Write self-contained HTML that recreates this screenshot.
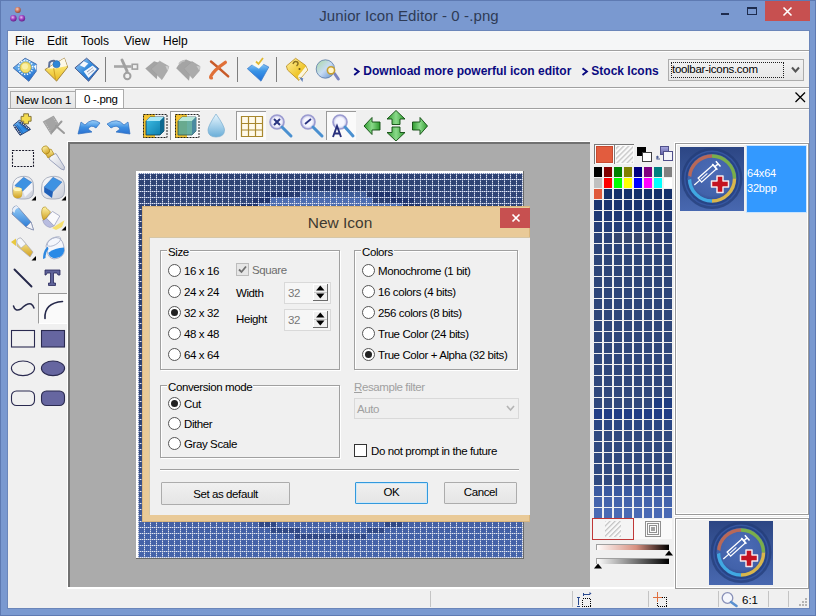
<!DOCTYPE html>
<html><head><meta charset="utf-8">
<style>
*{margin:0;padding:0;box-sizing:border-box}
html,body{width:816px;height:616px;overflow:hidden;background:#7797D0;font-family:"Liberation Sans",sans-serif}
.a{position:absolute}
#win{position:absolute;left:0;top:0;width:816px;height:616px;background:#7A99D0;border:1px solid #5E7AB2}
.title{position:absolute;left:0;top:7px;width:816px;text-align:center;font-size:15px;color:#1E2B45;letter-spacing:0.1px}
.menu span{position:absolute;top:34px;font-size:12px;color:#000}
.tb{font-size:11px}
.sep{position:absolute;width:1px;background:#A0A0A0;border-right:1px solid #fff}
</style></head><body>
<div id="win">
</div>
<!-- title -->
<div class="a title" style="left:1px;top:7px;color:#2E3B55">Junior Icon Editor - 0 -.png</div>
<!-- client -->
<div class="a" style="left:7px;top:30px;width:803px;height:579px;border:1px solid #6B86BA"></div>
<div class="a" style="left:8px;top:31px;width:801px;height:577px;background:#F0F0F0"></div>
<!-- menu bar -->
<div class="a" style="left:8px;top:31px;width:801px;height:19px;background:#F5F6F7"></div>
<div class="a" style="left:8px;top:50px;width:801px;height:1px;background:#A0A0A0"></div>
<div class="a" style="left:8px;top:51px;width:801px;height:1px;background:#FFFFFF"></div>
<div class="menu">
<span style="left:15px">File</span>
<span style="left:47px">Edit</span>
<span style="left:81px">Tools</span>
<span style="left:124px">View</span>
<span style="left:163px">Help</span>
</div>
<!-- toolbar 1 bottom line -->
<div class="a" style="left:8px;top:87px;width:801px;height:1px;background:#A0A0A0"></div>
<div class="a" style="left:8px;top:88px;width:801px;height:1px;background:#FFFFFF"></div>
<!-- tab bar line -->
<div class="a" style="left:8px;top:108px;width:801px;height:1px;background:#A0A0A0"></div>
<div class="a" style="left:8px;top:109px;width:801px;height:1px;background:#FFFFFF"></div>


<!-- app icon + window buttons -->
<svg class="a" style="left:0;top:0" width="816" height="31">
<defs>
<radialGradient id="gp" cx="0.4" cy="0.35" r="0.7"><stop offset="0" stop-color="#E6B6F0"/><stop offset="0.5" stop-color="#9B3FC0"/><stop offset="1" stop-color="#5E1E80"/></radialGradient>
<radialGradient id="go" cx="0.4" cy="0.35" r="0.7"><stop offset="0" stop-color="#F3D0C0"/><stop offset="0.5" stop-color="#D07A60"/><stop offset="1" stop-color="#8A4030"/></radialGradient>
</defs>
<circle cx="17.8" cy="10" r="3" fill="url(#go)"/>
<circle cx="13.4" cy="18.3" r="3.2" fill="url(#gp)"/>
<circle cx="21.9" cy="18.3" r="3.2" fill="url(#gp)"/>
<rect x="721" y="13" width="8" height="2" fill="#1E2C4E"/>
<rect x="747.5" y="7.5" width="9" height="7" fill="none" stroke="#1E2C4E" stroke-width="1"/>
<rect x="747" y="7" width="10" height="2" fill="#1E2C4E"/>
<rect x="765" y="1" width="45" height="20" fill="#C75050"/>
<path d="M783.5 7.5 L791.5 15.5 M791.5 7.5 L783.5 15.5" stroke="#fff" stroke-width="1.6"/>
</svg>
<!-- toolbar 1 icons -->
<svg class="a" style="left:0;top:52px" width="816" height="36" viewBox="0 52 816 36">
<defs>
<linearGradient id="gb1" x1="0" y1="0" x2="0" y2="1"><stop offset="0" stop-color="#8EC8F5"/><stop offset="0.45" stop-color="#3C8EE0"/><stop offset="1" stop-color="#1A5CB8"/></linearGradient>
<linearGradient id="gy1" x1="0" y1="0" x2="0" y2="1"><stop offset="0" stop-color="#FFF0A0"/><stop offset="0.5" stop-color="#F6CE3A"/><stop offset="1" stop-color="#C8941A"/></linearGradient>
<linearGradient id="gs1" x1="0" y1="0" x2="0" y2="1"><stop offset="0" stop-color="#C8C8C8"/><stop offset="1" stop-color="#8E8E8E"/></linearGradient>
<linearGradient id="gr1" x1="0" y1="0" x2="1" y2="1"><stop offset="0" stop-color="#F0A070"/><stop offset="1" stop-color="#B8401A"/></linearGradient>
<radialGradient id="gglobe" cx="0.35" cy="0.35" r="0.7"><stop offset="0" stop-color="#E8F4E8"/><stop offset="0.5" stop-color="#8CC0A0"/><stop offset="1" stop-color="#3C70B0"/></radialGradient>
</defs>
<!-- new -->
<linearGradient id="gnew" x1="0" y1="0" x2="0.3" y2="1"><stop offset="0" stop-color="#C8E6FA"/><stop offset="0.4" stop-color="#5AA6EA"/><stop offset="1" stop-color="#2674D2"/></linearGradient>
<path d="M13.2 67.9 L25.1 58.2 L36.6 64.3 L36.3 71.1 L28.8 81.3 Z" fill="url(#gnew)" stroke="#3A64A8" stroke-width="0.9" stroke-linejoin="round"/>
<path d="M33.9 66.2 L36.5 64.5 L36.3 71 Z" fill="#F4FAFF"/>
<circle cx="25.6" cy="67.4" r="7" fill="none" stroke="#F0FAFF" stroke-width="1.6" stroke-dasharray="1.3 1.5"/>
<circle cx="25.6" cy="67.4" r="5.4" fill="#F2E070" stroke="#D6B838" stroke-width="0.8"/>
<circle cx="25" cy="66.5" r="3" fill="#FAF0A8"/>
<!-- open -->
<linearGradient id="gfold" x1="0" y1="0" x2="0" y2="1"><stop offset="0" stop-color="#FFF6C8"/><stop offset="0.45" stop-color="#F8DE60"/><stop offset="1" stop-color="#E8B820"/></linearGradient>
<path d="M44.9 69.6 L64.4 58.2 L67.6 67.2 L56.6 81.1 Z" fill="url(#gfold)" stroke="#9C7A30" stroke-width="0.9" stroke-linejoin="round"/>
<path d="M47 68.5 L64.4 58.2 L67 66 L55 68.5 Z" fill="#FCF8E8"/>
<path d="M53.7 68.2 L55.5 79.4" stroke="#C89A20" stroke-width="0.9"/>
<circle cx="56.5" cy="64.2" r="3.6" fill="#2E86D8" stroke="#2A60A0" stroke-width="0.5"/>
<path d="M49 67.5 L49.5 62.5 Q52 60 55 61" stroke="#5A6E98" stroke-width="2" fill="none"/>
<!-- save -->
<linearGradient id="gflop" x1="0" y1="0" x2="1" y2="1"><stop offset="0" stop-color="#A8D4F8"/><stop offset="0.5" stop-color="#2E86DA"/><stop offset="1" stop-color="#3060B0"/></linearGradient>
<path d="M74.9 67.9 L86.6 58.2 L98.8 68.7 L88.6 81.3 Z" fill="url(#gflop)" stroke="#4A5C90" stroke-width="1" stroke-linejoin="round"/>
<path d="M83.7 71.6 L92.5 65.5 L96.9 69.1 L88.6 77.9 Z" fill="#F2F6FC"/>
<path d="M87 72 L93 67.5 M88.5 74 L94.5 69.5" stroke="#3A4A70" stroke-width="0.8" stroke-dasharray="0.9 0.6"/>
<path d="M79.8 65.2 L83.7 61.3 L88.3 63.5 L84.4 67.4 Z" fill="#F6F8FC"/>
<rect x="105" y="57" width="1" height="25" fill="#7E7E7E"/>
<!-- cut (gray) -->
<path d="M114 66.5 L131.5 66.5" stroke="#A6A6A6" stroke-width="2.6"/>
<rect x="132.2" y="64.3" width="5.3" height="4.8" fill="#F0F0F0" stroke="#A2A2A2" stroke-width="1.6"/>
<path d="M122 60 L127 71 L127 74" stroke="#A0A0A0" stroke-width="3" fill="none" stroke-linecap="round"/>
<circle cx="127.3" cy="76" r="3.2" fill="#F0F0F0" stroke="#A0A0A0" stroke-width="2"/>
<!-- copy gray -->
<path d="M145.3 68.6 L154.1 61.2 L159.6 63.1 L156.7 79.3 Z" fill="#A4A4A4"/>
<path d="M151.2 69 L159.6 61.2 L168.8 66.4 L167.4 70.8 L161.9 79.6 Z" fill="#ABABAB" stroke="#9C9C9C" stroke-width="0.6"/>
<path d="M165.5 66 L168.8 66.4 L167.4 70.8 Z" fill="#CFCFCF"/>
<!-- paste gray -->
<path d="M176.2 68.2 L181 61.2 L186.1 59.4 L192 62 L189 80.7 Z" fill="#A4A4A4"/>
<path d="M179 64 Q181 61 185 60.5" stroke="#C0C0C0" stroke-width="1.6" fill="none"/>
<path d="M183.9 68.6 L192 61.6 L200 66.4 L199.4 70.8 L192.7 78.5 Z" fill="#ABABAB" stroke="#9C9C9C" stroke-width="0.6"/>
<path d="M196.5 66 L200 66.4 L199.4 70.8 Z" fill="#CFCFCF"/>
<!-- delete X -->
<path d="M211 61.5 Q219 68 228.2 76.4" stroke="#C85A28" stroke-width="2.4" fill="none" stroke-linecap="round"/>
<path d="M225.4 62.3 Q214 70 211 76 Q210 78 211.5 78" stroke="#E07038" stroke-width="3.2" fill="none" stroke-linecap="round"/>
<rect x="237" y="57" width="1" height="25" fill="#7E7E7E"/>
<!-- import box check -->
<linearGradient id="gimp" x1="0" y1="0" x2="0" y2="1"><stop offset="0" stop-color="#A8D8FA"/><stop offset="0.5" stop-color="#3A94E6"/><stop offset="1" stop-color="#1E70D8"/></linearGradient>
<path d="M247.3 68.7 L257 61 L268.8 67 L261 81.2 Z" fill="url(#gimp)" stroke="#3A78C8" stroke-width="0.7" stroke-linejoin="round"/>
<path d="M251.2 64 L257.6 59.7 L264 63.6 L258.9 68.7 Z" fill="#FAFAF2"/>
<path d="M256 61.5 L258.5 64 L263 58" stroke="#E0B830" stroke-width="1.8" fill="none"/>
<rect x="276" y="57" width="1" height="25" fill="#7E7E7E"/>
<!-- help book -->
<linearGradient id="gbook" x1="0" y1="0" x2="1" y2="1"><stop offset="0" stop-color="#FFF0A0"/><stop offset="0.6" stop-color="#F0C830"/><stop offset="1" stop-color="#D8A820"/></linearGradient>
<path d="M286.4 66 L295.6 58.3 L305.5 65.3 L307.7 70 L298.9 80.4 L287.5 70 Z" fill="url(#gbook)" stroke="#B88A20" stroke-width="0.8" stroke-linejoin="round"/>
<path d="M298 76 L305.8 66.5 L307.4 70 L299 80 Z" fill="#FBF6E0"/>
<path d="M293 64 Q294 60.5 297.5 62 Q299 64 296.5 66" stroke="#8A7020" stroke-width="1.4" fill="none"/>
<circle cx="299.5" cy="69" r="1" fill="#6A5410"/>
<path d="M299 77 L302.5 82 L303 78.5 L305 79 Z" fill="#6080B8"/>
<!-- globe zoom -->
<linearGradient id="gglb" x1="0" y1="0" x2="1" y2="1"><stop offset="0" stop-color="#A8D8A0"/><stop offset="0.5" stop-color="#C8DCF4"/><stop offset="1" stop-color="#5A8AC8"/></linearGradient>
<circle cx="325.4" cy="69" r="9.2" fill="url(#gglb)" stroke="#5A7AA8" stroke-width="0.8"/>
<path d="M334.5 73.5 L338.3 79" stroke="#7A84C0" stroke-width="3" stroke-linecap="round"/>
<circle cx="331" cy="70.3" r="3.6" fill="#FFF6D0" stroke="#C8A030" stroke-width="1.6"/>
</svg>
<div class="a" style="left:353px;top:64px;font-size:12px;font-weight:bold;color:#0A0A80;white-space:nowrap"><span style="color:transparent">&gt;</span> Download more powerful icon editor</div>
<div class="a" style="left:581px;top:64px;font-size:12px;font-weight:bold;color:#0A0A80;white-space:nowrap"><span style="color:transparent">&gt;</span> Stock Icons</div>
<svg class="a" style="left:350px;top:64px" width="320" height="14" viewBox="350 64 320 14"><path d="M354.2 68.3 L358.6 71.6 L354.2 74.9 M582.5 68.3 L586.9 71.6 L582.5 74.9" stroke="#0A0A80" stroke-width="1.9" fill="none"/></svg>
<!-- combo -->
<div class="a" style="left:668px;top:59px;width:136px;height:22px;border:1px solid #ACACAC;background:linear-gradient(#F2F2F2,#E6E6E6)"></div>
<div class="a" style="left:671px;top:62px;width:113px;height:16px;border:1px dotted #202020"></div>
<div class="a" style="left:672px;top:63px;font-size:11.5px;color:#000;white-space:nowrap;letter-spacing:-0.3px">toolbar-icons.com</div>
<svg class="a" style="left:790px;top:64px" width="12" height="12"><path d="M2 3.5 L5.5 7.5 L9 3.5" stroke="#555" stroke-width="2" fill="none"/></svg>
<!-- tab close -->
<svg class="a" style="left:793px;top:90px" width="14" height="14"><path d="M2.5 2.5 L12 12 M12 2.5 L2.5 12" stroke="#000" stroke-width="1.3"/></svg>


<!-- tabs -->
<div class="a" style="left:10px;top:91px;width:66px;height:17px;background:linear-gradient(#F0F0F0,#E5E5E5);border:1px solid #ACACAC;border-bottom:none"></div>
<div class="a" style="left:16px;top:94px;font-size:11.5px;color:#000;white-space:nowrap;letter-spacing:-0.25px">New Icon 1</div>
<div class="a" style="left:75px;top:89px;width:49px;height:19px;background:#FFFFFF;border:1px solid #ACACAC;border-bottom:none"></div>
<div class="a" style="left:84px;top:93px;font-size:11.5px;color:#000;white-space:nowrap;letter-spacing:-0.3px">0 -.png</div>
<!-- pressed buttons -->
<div class="a" style="left:170px;top:111px;width:30px;height:29px;background:#FAFAFA;border-top:1px solid #9A9A9A;border-left:1px solid #9A9A9A"></div>
<div class="a" style="left:236px;top:111px;width:30px;height:29px;background:#FAFAFA;border-top:1px solid #9A9A9A;border-left:1px solid #9A9A9A"></div>
<div class="a" style="left:326px;top:111px;width:30px;height:29px;background:#FAFAFA;border-top:1px solid #9A9A9A;border-left:1px solid #9A9A9A"></div>
<svg class="a" style="left:0;top:109px" width="816" height="34" viewBox="0 109 816 34">
<defs>
<linearGradient id="gb2" x1="0" y1="0" x2="0" y2="1"><stop offset="0" stop-color="#9CD0F8"/><stop offset="0.5" stop-color="#3E90E2"/><stop offset="1" stop-color="#2A70D0"/></linearGradient>
<linearGradient id="gc1" x1="0" y1="0" x2="1" y2="1"><stop offset="0" stop-color="#40C0E8"/><stop offset="1" stop-color="#0878A8"/></linearGradient>
<linearGradient id="ggr" x1="0" y1="0" x2="1" y2="0"><stop offset="0" stop-color="#2E9A2E"/><stop offset="0.5" stop-color="#8ADA8A"/><stop offset="1" stop-color="#2E9A2E"/></linearGradient>
<linearGradient id="gdrop" x1="0" y1="0" x2="0" y2="1"><stop offset="0" stop-color="#E8F6FE"/><stop offset="1" stop-color="#6AAED8"/></linearGradient>
<radialGradient id="glens" cx="0.5" cy="0.5" r="0.5"><stop offset="0.6" stop-color="#F6F6FF"/><stop offset="1" stop-color="#B8B8E0"/></radialGradient>
</defs>
<!-- film + -->
<linearGradient id="gfilm" x1="0" y1="0" x2="0" y2="1"><stop offset="0" stop-color="#8CC8F6"/><stop offset="0.5" stop-color="#2A86E0"/><stop offset="1" stop-color="#3A96E8"/></linearGradient>
<path d="M13.4 125.1 L19.3 120.2 L30.5 129.5 L20.2 135.3 Z" fill="url(#gfilm)" stroke="#263C6C" stroke-width="0.9" stroke-linejoin="round"/>
<path d="M14.6 126 L20.8 134.5 M19.6 121.2 L29.6 129.4" stroke="#263C6C" stroke-width="2.6"/>
<path d="M14.6 126 L20.8 134.5 M19.6 121.2 L29.6 129.4" stroke="#F4F8FF" stroke-width="1.1" stroke-dasharray="1.1 1.1"/>
<path d="M16.8 124.5 L23 133 M18 122.5 L27.5 130.5" stroke="#1E5CB0" stroke-width="0.7"/>
<path d="M23.7 113.8 h4.8 v2.6 h2.6 v4.8 h-2.6 v2.6 h-4.8 v-2.6 h-2.6 v-4.8 h2.6 Z" fill="#F4DC50" stroke="#7A6A30" stroke-width="0.9" stroke-linejoin="round"/>
<!-- film x gray -->
<path d="M43.2 121.7 L53.6 116.1 L58 123.2 L51.2 134.4 Z" fill="#A4A4A4" stroke="#8E8E8E" stroke-width="0.6"/>
<path d="M45 122.5 L51 132.5 M53 117.5 L57 123" stroke="#C8C8C8" stroke-width="1" stroke-dasharray="1 1.2"/>
<path d="M61.5 121.5 L52 132 M56 126 L64 133" stroke="#9A9A9A" stroke-width="2" stroke-linecap="round"/>
<!-- undo -->
<path d="M78 134 L81 122 L85 125 Q92 117 100 123 L96 128 Q91 124 88 129 L92 132 Z" fill="url(#gb2)" stroke="#2E6EC0" stroke-width="0.7"/>
<!-- redo -->
<path d="M130 134 L128 122 L124 125 Q117 117 107 124 L111 128 Q117 124 120 129 L116 132 Z" fill="url(#gb2)" stroke="#2E6EC0" stroke-width="0.7"/>
<!-- cube 1 -->
<rect x="143" y="114" width="12" height="24" fill="#F2C230"/>
<rect x="143.5" y="114.5" width="23.5" height="23" fill="none" stroke="#222" stroke-width="1" stroke-dasharray="2 1"/>
<path d="M146 121 L150 117 L164 117 L164 131 L160 135 L146 135 Z" fill="url(#gc1)" stroke="#0A3A50" stroke-width="0.8"/>
<path d="M146 121 L150 117 L164 117 L160 121 Z" fill="#A8E8F8"/>
<path d="M160 121 L164 117 L164 131 L160 135 Z" fill="#0C6890"/>
<!-- cube 2 -->
<rect x="175" y="114" width="12" height="24" fill="#F2C230"/>
<rect x="175.5" y="114.5" width="23.5" height="23" fill="none" stroke="#222" stroke-width="1" stroke-dasharray="2 1"/>
<path d="M178 121 L182 117 L196 117 L196 131 L192 135 L178 135 Z" fill="#5AA89A" stroke="#1A4A50" stroke-width="0.8" opacity="0.9"/>
<path d="M178 121 L182 117 L196 117 L192 121 Z" fill="#B8E8D8"/>
<path d="M192 121 L196 117 L196 131 L192 135 Z" fill="#4A8AA0"/>
<!-- drop -->
<path d="M216 114 Q208 126 208 130 Q208 137 216 137 Q224.5 137 224.5 130 Q224.5 126 216 114 Z" fill="url(#gdrop)" stroke="#7AAED0" stroke-width="0.7"/>
<!-- grid -->
<rect x="241" y="116" width="22" height="21" fill="#FFFAEA"/>
<path d="M241.5 116.5 h21 v20 h-21 Z M248.5 116.5 v20 M255.5 116.5 v20 M241.5 123.5 h21 M241.5 130 h21" fill="none" stroke="#A8882E" stroke-width="1.2"/>
<!-- zoom in -->
<circle cx="277" cy="122" r="7" fill="url(#glens)" stroke="#9A9AD0" stroke-width="1.6"/>
<path d="M274 119 L280 125 M280 119 L274 125" stroke="#2A3480" stroke-width="2"/>
<path d="M282 127 L291 136" stroke="#4A90D0" stroke-width="3" stroke-linecap="round"/>
<!-- zoom out -->
<circle cx="308" cy="122" r="7" fill="url(#glens)" stroke="#9A9AD0" stroke-width="1.6"/>
<path d="M305 124 L311 119" stroke="#2A3480" stroke-width="1.8"/>
<path d="M313 127 L322 136" stroke="#4A90D0" stroke-width="3" stroke-linecap="round"/>
<!-- A zoom -->
<circle cx="340" cy="122" r="7" fill="url(#glens)" stroke="#9A9AD0" stroke-width="1.6"/>
<path d="M345 127 L353 136" stroke="#4A90D0" stroke-width="3" stroke-linecap="round"/>
<path d="M333 137 L337 126 L341 137 M334.5 133.5 h5" stroke="#28307C" stroke-width="1.9" fill="none"/>
<!-- arrows -->
<path d="M364 126 L372 117.5 L372 122 L380 122 L380 130 L372 130 L372 134.5 Z" fill="url(#ggr)" stroke="#0E4A0E" stroke-width="0.9"/>
<path d="M396 110.5 L405 119 L400 119 L400 124.5 L392 124.5 L392 119 L387 119 Z" fill="url(#ggr)" stroke="#0E4A0E" stroke-width="0.9"/>
<path d="M396 141 L405 132.5 L400 132.5 L400 127 L392 127 L392 132.5 L387 132.5 Z" fill="url(#ggr)" stroke="#0E4A0E" stroke-width="0.9"/>
<path d="M427.5 126 L420 117.5 L420 122 L412.5 122 L412.5 130 L420 130 L420 134.5 Z" fill="url(#ggr)" stroke="#0E4A0E" stroke-width="0.9"/>
</svg>


<!-- left tools -->
<div class="a" style="left:38px;top:293px;width:30px;height:31px;background:#FAFAFA;border-top:1px solid #9A9A9A;border-left:1px solid #9A9A9A;border-bottom:1px solid #FFFFFF"></div>
<svg class="a" style="left:0;top:143px" width="68" height="300" viewBox="0 143 68 300">
<defs>
<linearGradient id="gbl" x1="0" y1="0" x2="0" y2="1"><stop offset="0" stop-color="#9AD0F8"/><stop offset="1" stop-color="#1E70D0"/></linearGradient>
<linearGradient id="gwh" x1="0" y1="0" x2="1" y2="1"><stop offset="0" stop-color="#FFFFFF"/><stop offset="1" stop-color="#C8CCD8"/></linearGradient>
<linearGradient id="gyl" x1="0" y1="0" x2="0" y2="1"><stop offset="0" stop-color="#FFF4A8"/><stop offset="1" stop-color="#D0A020"/></linearGradient>
</defs>
<!-- select -->
<rect x="12.5" y="150.5" width="21" height="16" fill="none" stroke="#1A1A2A" stroke-width="1.1" stroke-dasharray="2 1.2"/>
<!-- pipette -->
<path d="M50.5 156 L56 153.5 L64.5 167 L64 170 L61 169 L49 159 Z" fill="url(#gwh)" stroke="#8890B0" stroke-width="0.8" stroke-linejoin="round"/>
<path d="M45 152.5 L51 149 L54 154 L48 158 Z" fill="url(#gyl)" stroke="#A88418" stroke-width="0.7"/>
<ellipse cx="45.8" cy="150" rx="3.6" ry="4.2" transform="rotate(-35 45.8 150)" fill="url(#gyl)" stroke="#A88418" stroke-width="0.7"/>
<!-- eraser 1 -->
<path d="M12.5 188 Q12.5 178 21 176.5 L25 176.3 Q33.5 177 33.5 186 L33.5 191 Q33.5 199 25 199 L21 199 Q12.5 199 12.5 191 Z" fill="url(#gwh)" stroke="#A4AABA" stroke-width="0.9"/>
<path d="M14.8 185.6 L23.6 177.3 L31.9 182.5 L23 191.3 Z" fill="#3E92E2" stroke="#2C6AB8" stroke-width="0.5"/>
<path d="M23 191.3 L31.9 182.5 L32.5 190 L25 197 Z" fill="#F2F4FA"/>
<rect x="13.2" y="187.5" width="8.8" height="10.5" rx="4" fill="url(#gyl)" stroke="#C8A030" stroke-width="0.5"/>
<ellipse cx="17.6" cy="189.2" rx="4.2" ry="1.8" fill="#FFF6B8"/>
<path d="M31.5 200.5 L36 196 L36 200.5 Z" fill="#000"/>
<!-- eraser 2 -->
<path d="M41.6 188 Q41.6 178 51 176.5 L55 176.3 Q64.5 177 64.5 186 L64.5 191 Q64.5 199 55 199 L51 199 Q41.6 199 41.6 191 Z" fill="url(#gwh)" stroke="#A4AABA" stroke-width="0.9"/>
<path d="M44.2 187.1 L53 177.3 L61.9 182 L53 191.8 Z" fill="#3E92E2" stroke="#2C6AB8" stroke-width="0.5"/>
<path d="M44.2 187.1 L53 191.8 L52 198 L44.2 192.3 Z" fill="#2060B8"/>
<path d="M61.5 200.5 L66 196 L66 200.5 Z" fill="#000"/>
<!-- pencil -->
<path d="M13 211 Q12 206 17 206 L31 222 L33.5 230 L26 227 L12 214 Z" fill="url(#gbl)" stroke="#7080A8" stroke-width="0.8"/>
<path d="M12.5 211 Q13 206 17 206 L19 208 Q15 208 14.5 213 Z" fill="#E8EEF8"/>
<path d="M26 227 L33.5 230 L31 222 Z" fill="#F4F4F8" stroke="#8088A8" stroke-width="0.6"/>
<!-- brush -->
<path d="M52 228 L64.5 220.2 L62 227 L56 230 Z" fill="#F6E070"/>
<path d="M42.7 220.2 L46.3 218.1 L54.1 225.9 L50 227.5 Q44 226 42.7 220.2 Z" fill="#B8BCE0" stroke="#9096B8" stroke-width="0.6"/>
<path d="M46.3 218.1 L52.5 211.4 L59.8 216 L54.1 225.9 Z" fill="#FAFAFC" stroke="#9096B8" stroke-width="0.7"/>
<path d="M42.5 218 Q40.5 211 43 207.5 Q45.5 205.8 47 208.5 L50.5 212 L46.3 218.1 L43.5 220 Z" fill="url(#gyl)" stroke="#A88418" stroke-width="0.6"/>
<path d="M61.5 230.5 L66 226 L66 230.5 Z" fill="#000"/>
<!-- spray -->
<path d="M11 242 L16 238.5 L16 246 Z" fill="#E8C840"/>
<path d="M17 243 Q16 238 21 238 L33 252 L30 257 L17 246 Z" fill="url(#gyl)" stroke="#A8A8B8" stroke-width="0.7"/>
<path d="M17 243 Q16 238 21 238 L26 244 L21 248 Z" fill="#F4F6FA" stroke="#A8ACB8" stroke-width="0.6"/>
<path d="M31.5 260.5 L36 256 L36 260.5 Z" fill="#000"/>
<!-- bucket -->
<path d="M46 246 Q48 238 56 237.5 Q62 238 63.5 245 L64.5 250 Q64 258 54 259 Q48 258 47.5 252 Z" fill="#F4F6FC" stroke="#9AA2BC" stroke-width="0.8"/>
<path d="M48.4 252.8 Q55 248 64 247.6 L64.2 251 Q63 257.5 54 258.2 Q49 257 48.4 252.8 Z" fill="#2A8AE6"/>
<path d="M47.8 246.5 Q43 250 43 259 L45.5 258 Q45.5 252 48.5 249 Z" fill="#2E88E0"/>
<ellipse cx="54" cy="241.5" rx="7.5" ry="3.5" transform="rotate(-30 54 241.5)" fill="none" stroke="#A8B0C8" stroke-width="0.8"/>
<!-- line -->
<path d="M14.5 269.5 L31.5 286.5" stroke="#25284A" stroke-width="1.9" stroke-linecap="round"/>
<!-- T -->
<path d="M45 270 h15 v5 h-2 l-1 -2 h-3.5 v10 h2 v2.5 h-7 v-2.5 h2 v-10 h-3.5 l-1 2 h-1 Z" fill="#5E6298" stroke="#28285A" stroke-width="0.8"/>
<!-- curve -->
<path d="M13.5 306 Q15 312 21 309 Q27 303 31 304 Q33 305 34 308" stroke="#25284A" stroke-width="1.5" fill="none" stroke-linecap="round"/>
<!-- arc -->
<path d="M45 318.5 Q44 303 62.5 301.5" stroke="#25284A" stroke-width="1.6" fill="none" stroke-linecap="round"/>
<!-- shapes -->
<rect x="11.5" y="330.5" width="23" height="16.5" fill="none" stroke="#2A2A50" stroke-width="1.1"/>
<rect x="41.5" y="330.5" width="23" height="16.5" fill="#6666A0" stroke="#2A2A50" stroke-width="1.1"/>
<ellipse cx="23" cy="368.3" rx="11.6" ry="7.3" fill="none" stroke="#2A2A50" stroke-width="1.1"/>
<ellipse cx="53" cy="368.3" rx="11.6" ry="7.3" fill="#6666A0" stroke="#2A2A50" stroke-width="1.1"/>
<rect x="11.5" y="391" width="23" height="14.5" rx="5" fill="none" stroke="#2A2A50" stroke-width="1.1"/>
<rect x="41.5" y="391" width="23" height="14.5" rx="5" fill="#6666A0" stroke="#2A2A50" stroke-width="1.1"/>
</svg>

<!-- canvas area -->
<div class="a" style="left:67px;top:141px;width:523px;height:446px;background:#FFFFFF"></div>
<div class="a" style="left:68px;top:142px;width:522px;height:445px;background:#ABABAB;border-top:2px solid #717171;border-left:2px solid #717171"></div>
<!-- image frame -->
<svg class="a" style="left:136px;top:171px" width="390" height="390" viewBox="136 171 390 390" shape-rendering="crispEdges">
<rect x="136" y="171" width="388" height="388" fill="#FFFFFF"/>
<rect x="523" y="171" width="1" height="388" fill="#6A6A6A"/><rect x="136" y="558" width="388" height="1" fill="#6A6A6A"/>
<rect x="138" y="173" width="384" height="6" fill="#2F4374"/>
<rect x="138" y="179" width="384" height="6" fill="#2F4374"/>
<rect x="138" y="185" width="150" height="6" fill="#2F4475"/>
<rect x="288" y="185" width="78" height="6" fill="#273C70"/>
<rect x="366" y="185" width="156" height="6" fill="#2F4475"/>
<rect x="138" y="191" width="126" height="6" fill="#304476"/>
<rect x="264" y="191" width="24" height="6" fill="#20346C"/>
<rect x="288" y="191" width="12" height="6" fill="#283C71"/>
<rect x="300" y="191" width="66" height="6" fill="#405C98"/>
<rect x="366" y="191" width="6" height="6" fill="#283C71"/>
<rect x="372" y="191" width="24" height="6" fill="#20346C"/>
<rect x="396" y="191" width="126" height="6" fill="#304476"/>
<rect x="138" y="197" width="114" height="6" fill="#304577"/>
<rect x="252" y="197" width="18" height="6" fill="#20346C"/>
<rect x="270" y="197" width="102" height="6" fill="#4C6CB0"/>
<rect x="372" y="197" width="18" height="6" fill="#293E72"/>
<rect x="390" y="197" width="24" height="6" fill="#20346C"/>
<rect x="414" y="197" width="108" height="6" fill="#304577"/>
<rect x="138" y="203" width="102" height="6" fill="#304578"/>
<rect x="240" y="203" width="18" height="6" fill="#20346C"/>
<rect x="258" y="203" width="144" height="6" fill="#4C6CB0"/>
<rect x="402" y="203" width="24" height="6" fill="#20346C"/>
<rect x="426" y="203" width="96" height="6" fill="#304578"/>
<rect x="138" y="209" width="12" height="6" fill="#2F4374"/>
<rect x="138" y="215" width="12" height="6" fill="#2F4374"/>
<rect x="138" y="221" width="12" height="6" fill="#2F4374"/>
<rect x="138" y="227" width="12" height="6" fill="#2F4374"/>
<rect x="138" y="233" width="12" height="6" fill="#2F4374"/>
<rect x="138" y="239" width="12" height="6" fill="#2F4374"/>
<rect x="138" y="245" width="12" height="6" fill="#2F4374"/>
<rect x="138" y="251" width="12" height="6" fill="#2F4374"/>
<rect x="138" y="257" width="12" height="6" fill="#2F4374"/>
<rect x="138" y="263" width="12" height="6" fill="#2F4374"/>
<rect x="138" y="269" width="12" height="6" fill="#2F4374"/>
<rect x="138" y="275" width="12" height="6" fill="#2F4374"/>
<rect x="138" y="281" width="12" height="6" fill="#2F4374"/>
<rect x="138" y="287" width="12" height="6" fill="#2F4374"/>
<rect x="138" y="293" width="12" height="6" fill="#2F4374"/>
<rect x="138" y="299" width="12" height="6" fill="#2F4374"/>
<rect x="138" y="305" width="12" height="6" fill="#2F4374"/>
<rect x="138" y="311" width="12" height="6" fill="#2F4374"/>
<rect x="138" y="317" width="12" height="6" fill="#2F4374"/>
<rect x="138" y="323" width="12" height="6" fill="#2F4374"/>
<rect x="138" y="329" width="12" height="6" fill="#2F4374"/>
<rect x="138" y="335" width="12" height="6" fill="#2F4374"/>
<rect x="138" y="341" width="12" height="6" fill="#2F4374"/>
<rect x="138" y="347" width="12" height="6" fill="#2F4374"/>
<rect x="138" y="353" width="12" height="6" fill="#2F4374"/>
<rect x="138" y="359" width="12" height="6" fill="#2F4374"/>
<rect x="138" y="365" width="12" height="6" fill="#2F4374"/>
<rect x="138" y="371" width="12" height="6" fill="#2F4374"/>
<rect x="138" y="377" width="12" height="6" fill="#2F4374"/>
<rect x="138" y="383" width="12" height="6" fill="#2F4374"/>
<rect x="138" y="389" width="12" height="6" fill="#2F4374"/>
<rect x="138" y="395" width="12" height="6" fill="#2F4374"/>
<rect x="138" y="401" width="12" height="6" fill="#2F4374"/>
<rect x="138" y="407" width="12" height="6" fill="#2F4374"/>
<rect x="138" y="413" width="12" height="6" fill="#2F4476"/>
<rect x="138" y="419" width="12" height="6" fill="#304577"/>
<rect x="138" y="425" width="12" height="6" fill="#314678"/>
<rect x="138" y="431" width="12" height="6" fill="#31477A"/>
<rect x="138" y="437" width="12" height="6" fill="#32487C"/>
<rect x="138" y="443" width="12" height="6" fill="#33497E"/>
<rect x="138" y="449" width="12" height="6" fill="#344A80"/>
<rect x="138" y="455" width="12" height="6" fill="#354B82"/>
<rect x="138" y="461" width="12" height="6" fill="#354D84"/>
<rect x="138" y="467" width="12" height="6" fill="#364E86"/>
<rect x="138" y="473" width="12" height="6" fill="#374F88"/>
<rect x="138" y="479" width="12" height="6" fill="#38518B"/>
<rect x="138" y="485" width="12" height="6" fill="#39528D"/>
<rect x="138" y="491" width="12" height="6" fill="#3A538F"/>
<rect x="138" y="497" width="12" height="6" fill="#3B5592"/>
<rect x="138" y="503" width="12" height="6" fill="#3C5694"/>
<rect x="138" y="509" width="12" height="6" fill="#3E5897"/>
<rect x="138" y="515" width="384" height="6" fill="#3F5A99"/>
<rect x="138" y="521" width="120" height="6" fill="#4461A5"/>
<rect x="258" y="521" width="18" height="6" fill="#304885"/>
<rect x="276" y="521" width="108" height="6" fill="#4461A5"/>
<rect x="384" y="521" width="18" height="6" fill="#304885"/>
<rect x="402" y="521" width="120" height="6" fill="#4461A5"/>
<rect x="138" y="527" width="132" height="6" fill="#4461A6"/>
<rect x="270" y="527" width="30" height="6" fill="#304886"/>
<rect x="300" y="527" width="66" height="6" fill="#4461A6"/>
<rect x="366" y="527" width="18" height="6" fill="#304886"/>
<rect x="384" y="527" width="138" height="6" fill="#4461A6"/>
<rect x="138" y="533" width="156" height="6" fill="#4462A7"/>
<rect x="294" y="533" width="72" height="6" fill="#304886"/>
<rect x="366" y="533" width="156" height="6" fill="#4462A7"/>
<rect x="138" y="539" width="384" height="6" fill="#4562A8"/>
<rect x="138" y="545" width="384" height="6" fill="#4563A9"/>
<rect x="138" y="551" width="384" height="6" fill="#4664AA"/>
<path d="M138.5 173 v385 M138 173.5 h385 M144.5 173 v385 M138 179.5 h385 M150.5 173 v385 M138 185.5 h385 M156.5 173 v385 M138 191.5 h385 M162.5 173 v385 M138 197.5 h385 M168.5 173 v385 M138 203.5 h385 M174.5 173 v385 M138 209.5 h385 M180.5 173 v385 M138 215.5 h385 M186.5 173 v385 M138 221.5 h385 M192.5 173 v385 M138 227.5 h385 M198.5 173 v385 M138 233.5 h385 M204.5 173 v385 M138 239.5 h385 M210.5 173 v385 M138 245.5 h385 M216.5 173 v385 M138 251.5 h385 M222.5 173 v385 M138 257.5 h385 M228.5 173 v385 M138 263.5 h385 M234.5 173 v385 M138 269.5 h385 M240.5 173 v385 M138 275.5 h385 M246.5 173 v385 M138 281.5 h385 M252.5 173 v385 M138 287.5 h385 M258.5 173 v385 M138 293.5 h385 M264.5 173 v385 M138 299.5 h385 M270.5 173 v385 M138 305.5 h385 M276.5 173 v385 M138 311.5 h385 M282.5 173 v385 M138 317.5 h385 M288.5 173 v385 M138 323.5 h385 M294.5 173 v385 M138 329.5 h385 M300.5 173 v385 M138 335.5 h385 M306.5 173 v385 M138 341.5 h385 M312.5 173 v385 M138 347.5 h385 M318.5 173 v385 M138 353.5 h385 M324.5 173 v385 M138 359.5 h385 M330.5 173 v385 M138 365.5 h385 M336.5 173 v385 M138 371.5 h385 M342.5 173 v385 M138 377.5 h385 M348.5 173 v385 M138 383.5 h385 M354.5 173 v385 M138 389.5 h385 M360.5 173 v385 M138 395.5 h385 M366.5 173 v385 M138 401.5 h385 M372.5 173 v385 M138 407.5 h385 M378.5 173 v385 M138 413.5 h385 M384.5 173 v385 M138 419.5 h385 M390.5 173 v385 M138 425.5 h385 M396.5 173 v385 M138 431.5 h385 M402.5 173 v385 M138 437.5 h385 M408.5 173 v385 M138 443.5 h385 M414.5 173 v385 M138 449.5 h385 M420.5 173 v385 M138 455.5 h385 M426.5 173 v385 M138 461.5 h385 M432.5 173 v385 M138 467.5 h385 M438.5 173 v385 M138 473.5 h385 M444.5 173 v385 M138 479.5 h385 M450.5 173 v385 M138 485.5 h385 M456.5 173 v385 M138 491.5 h385 M462.5 173 v385 M138 497.5 h385 M468.5 173 v385 M138 503.5 h385 M474.5 173 v385 M138 509.5 h385 M480.5 173 v385 M138 515.5 h385 M486.5 173 v385 M138 521.5 h385 M492.5 173 v385 M138 527.5 h385 M498.5 173 v385 M138 533.5 h385 M504.5 173 v385 M138 539.5 h385 M510.5 173 v385 M138 545.5 h385 M516.5 173 v385 M138 551.5 h385 M522.5 173 v385 M138 557.5 h385" stroke="#8C9CC4" stroke-width="1" opacity="0.85"/>
<path d="M138.5 173 v385 M138 173.5 h385 M144.5 173 v385 M138 179.5 h385 M150.5 173 v385 M138 185.5 h385 M156.5 173 v385 M138 191.5 h385 M162.5 173 v385 M138 197.5 h385 M168.5 173 v385 M138 203.5 h385 M174.5 173 v385 M138 209.5 h385 M180.5 173 v385 M138 215.5 h385 M186.5 173 v385 M138 221.5 h385 M192.5 173 v385 M138 227.5 h385 M198.5 173 v385 M138 233.5 h385 M204.5 173 v385 M138 239.5 h385 M210.5 173 v385 M138 245.5 h385 M216.5 173 v385 M138 251.5 h385 M222.5 173 v385 M138 257.5 h385 M228.5 173 v385 M138 263.5 h385 M234.5 173 v385 M138 269.5 h385 M240.5 173 v385 M138 275.5 h385 M246.5 173 v385 M138 281.5 h385 M252.5 173 v385 M138 287.5 h385 M258.5 173 v385 M138 293.5 h385 M264.5 173 v385 M138 299.5 h385 M270.5 173 v385 M138 305.5 h385 M276.5 173 v385 M138 311.5 h385 M282.5 173 v385 M138 317.5 h385 M288.5 173 v385 M138 323.5 h385 M294.5 173 v385 M138 329.5 h385 M300.5 173 v385 M138 335.5 h385 M306.5 173 v385 M138 341.5 h385 M312.5 173 v385 M138 347.5 h385 M318.5 173 v385 M138 353.5 h385 M324.5 173 v385 M138 359.5 h385 M330.5 173 v385 M138 365.5 h385 M336.5 173 v385 M138 371.5 h385 M342.5 173 v385 M138 377.5 h385 M348.5 173 v385 M138 383.5 h385 M354.5 173 v385 M138 389.5 h385 M360.5 173 v385 M138 395.5 h385 M366.5 173 v385 M138 401.5 h385 M372.5 173 v385 M138 407.5 h385 M378.5 173 v385 M138 413.5 h385 M384.5 173 v385 M138 419.5 h385 M390.5 173 v385 M138 425.5 h385 M396.5 173 v385 M138 431.5 h385 M402.5 173 v385 M138 437.5 h385 M408.5 173 v385 M138 443.5 h385 M414.5 173 v385 M138 449.5 h385 M420.5 173 v385 M138 455.5 h385 M426.5 173 v385 M138 461.5 h385 M432.5 173 v385 M138 467.5 h385 M438.5 173 v385 M138 473.5 h385 M444.5 173 v385 M138 479.5 h385 M450.5 173 v385 M138 485.5 h385 M456.5 173 v385 M138 491.5 h385 M462.5 173 v385 M138 497.5 h385 M468.5 173 v385 M138 503.5 h385 M474.5 173 v385 M138 509.5 h385 M480.5 173 v385 M138 515.5 h385 M486.5 173 v385 M138 521.5 h385 M492.5 173 v385 M138 527.5 h385 M498.5 173 v385 M138 533.5 h385 M504.5 173 v385 M138 539.5 h385 M510.5 173 v385 M138 545.5 h385 M516.5 173 v385 M138 551.5 h385 M522.5 173 v385 M138 557.5 h385" stroke="#E4E8F2" stroke-width="1" stroke-dasharray="1 1"/>
</svg>
<!-- dialog -->
<div class="a" style="left:142px;top:206px;width:388px;height:316px;background:#E9CA98;border:1px solid #D9B67E"></div>
<div class="a" style="left:149px;top:237px;width:381px;height:278px;background:#F0F0F0;border-top:1px solid #D6C6A6;border-left:1px solid #D6C6A6"></div>
<div class="a" style="left:5px;top:214px;width:670px;text-align:center;font-size:15.5px;line-height:18px;color:#3E3A32">New Icon</div>
<div class="a" style="left:500px;top:208px;width:30px;height:20px;background:#C75050"></div>
<svg class="a" style="left:500px;top:208px" width="30" height="20"><path d="M12.5 6.5 L19.5 13.5 M19.5 6.5 L12.5 13.5" stroke="#fff" stroke-width="1.7"/></svg>
<style>
.t{position:absolute;font-size:11.5px;line-height:13px;color:#000;white-space:nowrap;letter-spacing:-0.4px;margin-top:1px}
.gb{position:absolute;border:1px solid #A0A0A0;box-shadow:inset 1px 1px 0 #fff,1px 1px 0 #fff}
.rd{position:absolute;width:13px;height:13px;border-radius:50%;border:1px solid #555;background:#fff}
.rd.on::after{content:"";position:absolute;left:2px;top:2px;width:7px;height:7px;border-radius:50%;background:#222}
.btn{position:absolute;height:23px;border:1px solid #ACACAC;background:linear-gradient(#F0F0F0,#E5E5E5);border-radius:1px}
</style>
<!-- Size group -->
<div class="gb" style="left:160px;top:250px;width:180px;height:120px"></div>
<div class="t" style="left:167px;top:245px;background:#F0F0F0;padding:0 1px 0 1px">Size</div>
<div class="rd" style="left:168px;top:264px"></div><div class="t" style="left:184px;top:264px">16 x 16</div>
<div class="rd" style="left:168px;top:285px"></div><div class="t" style="left:184px;top:285px">24 x 24</div>
<div class="rd on" style="left:168px;top:306px"></div><div class="t" style="left:184px;top:306px">32 x 32</div>
<div class="rd" style="left:168px;top:327px"></div><div class="t" style="left:184px;top:327px">48 x 48</div>
<div class="rd" style="left:168px;top:348px"></div><div class="t" style="left:184px;top:348px">64 x 64</div>
<div class="a" style="left:236px;top:263px;width:13px;height:13px;border:1px solid #BCBCBC;background:#E6E6E6"></div>
<svg class="a" style="left:236px;top:263px" width="13" height="13"><path d="M3 6.5 L5.5 9 L10 3.5" stroke="#6F6F6F" stroke-width="1.8" fill="none"/></svg>
<div class="t" style="left:252px;top:263px;color:#6D6D6D">Square</div>
<div class="t" style="left:236px;top:286px">Width</div>
<div class="t" style="left:236px;top:312px">Height</div>
<div class="a" style="left:284px;top:282px;width:47px;height:22px;border:1px solid #D9D9D9;background:#F6F6F6"></div>
<div class="a" style="left:284px;top:309px;width:47px;height:22px;border:1px solid #D9D9D9;background:#F6F6F6"></div>
<div class="t" style="left:288px;top:286px;color:#767676">32</div>
<div class="t" style="left:288px;top:313px;color:#767676">32</div>
<svg class="a" style="left:312px;top:283px" width="17" height="48" viewBox="312 283 17 48" shape-rendering="crispEdges">
<rect x="313" y="284" width="15" height="17" fill="#F0F0F0"/>
<rect x="313" y="284" width="14" height="1" fill="#FFFFFF"/><rect x="313" y="284" width="1" height="16" fill="#FFFFFF"/>
<rect x="313" y="300" width="15" height="1" fill="#6A6A6A"/><rect x="327" y="284" width="1" height="17" fill="#6A6A6A"/>
<rect x="314" y="292" width="13" height="1" fill="#C8C8C8"/>
<rect x="313" y="311" width="15" height="17" fill="#F0F0F0"/>
<rect x="313" y="311" width="14" height="1" fill="#FFFFFF"/><rect x="313" y="311" width="1" height="16" fill="#FFFFFF"/>
<rect x="313" y="327" width="15" height="1" fill="#6A6A6A"/><rect x="327" y="311" width="1" height="17" fill="#6A6A6A"/>
<rect x="314" y="319" width="13" height="1" fill="#C8C8C8"/>
</svg>
<svg class="a" style="left:312px;top:283px" width="17" height="48" viewBox="312 283 17 48">
<path d="M320.3 285.5 L324.5 290.5 L316.1 290.5 Z" fill="#000"/>
<path d="M320.3 298.5 L324.5 293.5 L316.1 293.5 Z" fill="#000"/>
<path d="M320.3 312.5 L324.5 317.5 L316.1 317.5 Z" fill="#000"/>
<path d="M320.3 325.5 L324.5 320.5 L316.1 320.5 Z" fill="#000"/>
</svg>
<!-- Conversion group -->
<div class="gb" style="left:160px;top:385px;width:180px;height:73px"></div>
<div class="t" style="left:167px;top:380px;background:#F0F0F0;padding:0 1px 0 1px">Conversion mode</div>
<div class="rd on" style="left:168px;top:397px"></div><div class="t" style="left:184px;top:397px">Cut</div>
<div class="rd" style="left:168px;top:417px"></div><div class="t" style="left:184px;top:417px">Dither</div>
<div class="rd" style="left:168px;top:437px"></div><div class="t" style="left:184px;top:437px">Gray Scale</div>
<!-- Colors group -->
<div class="gb" style="left:354px;top:250px;width:164px;height:120px"></div>
<div class="t" style="left:361px;top:245px;background:#F0F0F0;padding:0 1px 0 1px">Colors</div>
<div class="rd" style="left:362px;top:264px"></div><div class="t" style="left:378px;top:264px">Monochrome (1 bit)</div>
<div class="rd" style="left:362px;top:285px"></div><div class="t" style="left:378px;top:285px">16 colors (4 bits)</div>
<div class="rd" style="left:362px;top:306px"></div><div class="t" style="left:378px;top:306px">256 colors (8 bits)</div>
<div class="rd" style="left:362px;top:327px"></div><div class="t" style="left:378px;top:327px">True Color (24 bits)</div>
<div class="rd on" style="left:362px;top:348px"></div><div class="t" style="left:378px;top:348px">True Color + Alpha (32 bits)</div>
<!-- resample -->
<div class="t" style="left:354px;top:380px;color:#A0A0A0"><u>R</u>esample filter</div>
<div class="a" style="left:354px;top:398px;width:165px;height:21px;border:1px solid #D9D9D9;background:#EFEFEF"></div>
<div class="t" style="left:357px;top:402px;color:#A0A0A0">Auto</div>
<svg class="a" style="left:505px;top:403px" width="11" height="10"><path d="M2 3 L5.5 7 L9 3" stroke="#B4B4B4" stroke-width="1.6" fill="none"/></svg>
<div class="a" style="left:354px;top:444px;width:13px;height:13px;border:1px solid #333;background:#fff"></div>
<div class="t" style="left:371px;top:444px">Do not prompt in the future</div>
<!-- separator -->
<div class="a" style="left:160px;top:469px;width:359px;height:1px;background:#A0A0A0"></div>
<div class="a" style="left:160px;top:470px;width:359px;height:1px;background:#FFFFFF"></div>
<!-- buttons -->
<div class="btn" style="left:161px;top:482px;width:129px"></div>
<div class="t" style="left:161px;top:487px;width:129px;text-align:center">Set as default</div>
<div class="btn" style="left:355px;top:482px;width:73px;height:22px;border-color:#3399DD;box-shadow:inset 0 0 0 1px #CDE8F8"></div>
<div class="t" style="left:355px;top:485px;width:73px;text-align:center">OK</div>
<div class="btn" style="left:444px;top:482px;width:73px;height:22px"></div>
<div class="t" style="left:444px;top:485px;width:73px;text-align:center">Cancel</div>

<!-- palette -->
<svg class="a" style="left:591px;top:143px" width="84" height="445" viewBox="591 143 84 445">
<defs>
<pattern id="hatch" width="3.6" height="3.6" patternUnits="userSpaceOnUse" patternTransform="rotate(45)"><rect width="3.6" height="3.6" fill="#FAFAFA"/><rect width="1.3" height="3.6" fill="#C4C4C4"/></pattern>
<linearGradient id="gsl1" x1="0" x2="1"><stop offset="0" stop-color="#FFFFFF"/><stop offset="0.55" stop-color="#D89080"/><stop offset="1" stop-color="#000"/></linearGradient>
<linearGradient id="gsl2" x1="0" x2="1"><stop offset="0" stop-color="#FFFFFF"/><stop offset="1" stop-color="#000"/></linearGradient>
<linearGradient id="gpur" x1="0" y1="0" x2="0" y2="1"><stop offset="0" stop-color="#A8A8E0"/><stop offset="1" stop-color="#6060A8"/></linearGradient>
</defs>
<g shape-rendering="crispEdges">
<rect x="594" y="144" width="40" height="20" fill="#FAFAFA"/>
<rect x="594" y="144" width="40" height="1" fill="#7A7A7A"/>
<rect x="594" y="144" width="1" height="20" fill="#7A7A7A"/>
<rect x="614" y="145" width="1" height="19" fill="#7A7A7A"/>
<rect x="596" y="146" width="17" height="17" fill="#C84A30"/>
<rect x="597" y="147" width="15" height="15" fill="#E25C3E"/>
</g>
<rect x="616" y="146" width="17" height="17" fill="url(#hatch)"/>
<g shape-rendering="crispEdges">
<rect x="637" y="147" width="9" height="9" fill="#000"/>
<rect x="642.5" y="152.5" width="9" height="9" fill="#fff" stroke="#404040"/>
<rect x="660.5" y="146.5" width="8" height="8" fill="url(#gpur)" stroke="#50508A"/>
<rect x="663.5" y="151.5" width="9" height="9" fill="#F4F4FA" stroke="#50508A"/>
</g>
<path d="M657 156 v3 h3 M657 156 l1.5 1.5" stroke="#4A5A90" stroke-width="1.2" fill="none"/>
<g shape-rendering="crispEdges">
<rect x="594" y="167" width="8" height="10" fill="#000000"/>
<rect x="604" y="167" width="8" height="10" fill="#800000"/>
<rect x="614" y="167" width="8" height="10" fill="#008000"/>
<rect x="624" y="167" width="8" height="10" fill="#808000"/>
<rect x="634" y="167" width="8" height="10" fill="#000080"/>
<rect x="644" y="167" width="8" height="10" fill="#800080"/>
<rect x="654" y="167" width="8" height="10" fill="#008080"/>
<rect x="664" y="167" width="8" height="10" fill="#808080"/>
<rect x="594" y="178" width="8" height="10" fill="#C0C0C0"/>
<rect x="604" y="178" width="8" height="10" fill="#FF0000"/>
<rect x="614" y="178" width="8" height="10" fill="#00FF00"/>
<rect x="624" y="178" width="8" height="10" fill="#FFFF00"/>
<rect x="634" y="178" width="8" height="10" fill="#0000FF"/>
<rect x="644" y="178" width="8" height="10" fill="#FF00FF"/>
<rect x="654" y="178" width="8" height="10" fill="#00FFFF"/>
<rect x="664" y="178" width="8" height="10" fill="#FFFFFF"/>
<rect x="594" y="189" width="8" height="10" fill="#E05A3C"/>
<rect x="604" y="189" width="8" height="10" fill="#15306A"/>
<rect x="614" y="189" width="8" height="10" fill="#15306A"/>
<rect x="624" y="189" width="8" height="10" fill="#15306A"/>
<rect x="634" y="189" width="8" height="10" fill="#15306A"/>
<rect x="644" y="189" width="8" height="10" fill="#15306A"/>
<rect x="654" y="189" width="8" height="10" fill="#15306A"/>
<rect x="664" y="189" width="8" height="10" fill="#15306A"/>
<rect x="594" y="200" width="8" height="10" fill="#1A3470"/>
<rect x="604" y="200" width="8" height="10" fill="#1A3470"/>
<rect x="614" y="200" width="8" height="10" fill="#1A3470"/>
<rect x="624" y="200" width="8" height="10" fill="#1A3470"/>
<rect x="634" y="200" width="8" height="10" fill="#1A3470"/>
<rect x="644" y="200" width="8" height="10" fill="#1A3470"/>
<rect x="654" y="200" width="8" height="10" fill="#1A3470"/>
<rect x="664" y="200" width="8" height="10" fill="#1A3470"/>
<rect x="594" y="211" width="8" height="10" fill="#1E3874"/>
<rect x="604" y="211" width="8" height="10" fill="#1E3874"/>
<rect x="614" y="211" width="8" height="10" fill="#1E3874"/>
<rect x="624" y="211" width="8" height="10" fill="#1E3874"/>
<rect x="634" y="211" width="8" height="10" fill="#1E3874"/>
<rect x="644" y="211" width="8" height="10" fill="#1E3874"/>
<rect x="654" y="211" width="8" height="10" fill="#1E3874"/>
<rect x="664" y="211" width="8" height="10" fill="#1E3874"/>
<rect x="594" y="222" width="8" height="10" fill="#243E78"/>
<rect x="604" y="222" width="8" height="10" fill="#243E78"/>
<rect x="614" y="222" width="8" height="10" fill="#243E78"/>
<rect x="624" y="222" width="8" height="10" fill="#243E78"/>
<rect x="634" y="222" width="8" height="10" fill="#243E78"/>
<rect x="644" y="222" width="8" height="10" fill="#243E78"/>
<rect x="654" y="222" width="8" height="10" fill="#243E78"/>
<rect x="664" y="222" width="8" height="10" fill="#243E78"/>
<rect x="594" y="233" width="8" height="10" fill="#2A4278"/>
<rect x="604" y="233" width="8" height="10" fill="#2A4278"/>
<rect x="614" y="233" width="8" height="10" fill="#344670"/>
<rect x="624" y="233" width="8" height="10" fill="#344670"/>
<rect x="634" y="233" width="8" height="10" fill="#344670"/>
<rect x="644" y="233" width="8" height="10" fill="#344670"/>
<rect x="654" y="233" width="8" height="10" fill="#2A4278"/>
<rect x="664" y="233" width="8" height="10" fill="#2A4278"/>
<rect x="594" y="244" width="8" height="10" fill="#2C4478"/>
<rect x="604" y="244" width="8" height="10" fill="#2C4478"/>
<rect x="614" y="244" width="8" height="10" fill="#2C4478"/>
<rect x="624" y="244" width="8" height="10" fill="#2C4478"/>
<rect x="634" y="244" width="8" height="10" fill="#2C4478"/>
<rect x="644" y="244" width="8" height="10" fill="#2C4478"/>
<rect x="654" y="244" width="8" height="10" fill="#2C4478"/>
<rect x="664" y="244" width="8" height="10" fill="#2C4478"/>
<rect x="594" y="255" width="8" height="10" fill="#2E4678"/>
<rect x="604" y="255" width="8" height="10" fill="#2E4678"/>
<rect x="614" y="255" width="8" height="10" fill="#2E4678"/>
<rect x="624" y="255" width="8" height="10" fill="#2E4678"/>
<rect x="634" y="255" width="8" height="10" fill="#2E4678"/>
<rect x="644" y="255" width="8" height="10" fill="#2E4678"/>
<rect x="654" y="255" width="8" height="10" fill="#2E4678"/>
<rect x="664" y="255" width="8" height="10" fill="#2E4678"/>
<rect x="594" y="266" width="8" height="10" fill="#2E4678"/>
<rect x="604" y="266" width="8" height="10" fill="#2E4678"/>
<rect x="614" y="266" width="8" height="10" fill="#2E4678"/>
<rect x="624" y="266" width="8" height="10" fill="#2E4678"/>
<rect x="634" y="266" width="8" height="10" fill="#2E4678"/>
<rect x="644" y="266" width="8" height="10" fill="#2E4678"/>
<rect x="654" y="266" width="8" height="10" fill="#2E4678"/>
<rect x="664" y="266" width="8" height="10" fill="#2E4678"/>
<rect x="594" y="277" width="8" height="10" fill="#2E4678"/>
<rect x="604" y="277" width="8" height="10" fill="#2E4678"/>
<rect x="614" y="277" width="8" height="10" fill="#2E4678"/>
<rect x="624" y="277" width="8" height="10" fill="#2E4678"/>
<rect x="634" y="277" width="8" height="10" fill="#2E4678"/>
<rect x="644" y="277" width="8" height="10" fill="#2E4678"/>
<rect x="654" y="277" width="8" height="10" fill="#2E4678"/>
<rect x="664" y="277" width="8" height="10" fill="#2E4678"/>
<rect x="594" y="288" width="8" height="10" fill="#2E4679"/>
<rect x="604" y="288" width="8" height="10" fill="#2E4679"/>
<rect x="614" y="288" width="8" height="10" fill="#2E4679"/>
<rect x="624" y="288" width="8" height="10" fill="#2E4679"/>
<rect x="634" y="288" width="8" height="10" fill="#2E4679"/>
<rect x="644" y="288" width="8" height="10" fill="#2E4679"/>
<rect x="654" y="288" width="8" height="10" fill="#2E4679"/>
<rect x="664" y="288" width="8" height="10" fill="#2E4679"/>
<rect x="594" y="299" width="8" height="10" fill="#2E4679"/>
<rect x="604" y="299" width="8" height="10" fill="#2E4679"/>
<rect x="614" y="299" width="8" height="10" fill="#2E4679"/>
<rect x="624" y="299" width="8" height="10" fill="#2E4679"/>
<rect x="634" y="299" width="8" height="10" fill="#2E4679"/>
<rect x="644" y="299" width="8" height="10" fill="#2E4679"/>
<rect x="654" y="299" width="8" height="10" fill="#2E4679"/>
<rect x="664" y="299" width="8" height="10" fill="#2E4679"/>
<rect x="594" y="310" width="8" height="10" fill="#2E4679"/>
<rect x="604" y="310" width="8" height="10" fill="#2E4679"/>
<rect x="614" y="310" width="8" height="10" fill="#2E4679"/>
<rect x="624" y="310" width="8" height="10" fill="#2E4679"/>
<rect x="634" y="310" width="8" height="10" fill="#2E4679"/>
<rect x="644" y="310" width="8" height="10" fill="#2E4679"/>
<rect x="654" y="310" width="8" height="10" fill="#2E4679"/>
<rect x="664" y="310" width="8" height="10" fill="#2E4679"/>
<rect x="594" y="321" width="8" height="10" fill="#2F477A"/>
<rect x="604" y="321" width="8" height="10" fill="#2F477A"/>
<rect x="614" y="321" width="8" height="10" fill="#2F477A"/>
<rect x="624" y="321" width="8" height="10" fill="#2F477A"/>
<rect x="634" y="321" width="8" height="10" fill="#2F477A"/>
<rect x="644" y="321" width="8" height="10" fill="#2F477A"/>
<rect x="654" y="321" width="8" height="10" fill="#2F477A"/>
<rect x="664" y="321" width="8" height="10" fill="#2F477A"/>
<rect x="594" y="332" width="8" height="10" fill="#2F477A"/>
<rect x="604" y="332" width="8" height="10" fill="#2F477A"/>
<rect x="614" y="332" width="8" height="10" fill="#2F477A"/>
<rect x="624" y="332" width="8" height="10" fill="#2F477A"/>
<rect x="634" y="332" width="8" height="10" fill="#2F477A"/>
<rect x="644" y="332" width="8" height="10" fill="#2F477A"/>
<rect x="654" y="332" width="8" height="10" fill="#2F477A"/>
<rect x="664" y="332" width="8" height="10" fill="#2F477A"/>
<rect x="594" y="343" width="8" height="10" fill="#2F477A"/>
<rect x="604" y="343" width="8" height="10" fill="#2F477A"/>
<rect x="614" y="343" width="8" height="10" fill="#2F477A"/>
<rect x="624" y="343" width="8" height="10" fill="#2F477A"/>
<rect x="634" y="343" width="8" height="10" fill="#2F477A"/>
<rect x="644" y="343" width="8" height="10" fill="#2F477A"/>
<rect x="654" y="343" width="8" height="10" fill="#2F477A"/>
<rect x="664" y="343" width="8" height="10" fill="#2F477A"/>
<rect x="594" y="354" width="8" height="10" fill="#2F477B"/>
<rect x="604" y="354" width="8" height="10" fill="#2F477B"/>
<rect x="614" y="354" width="8" height="10" fill="#2F477B"/>
<rect x="624" y="354" width="8" height="10" fill="#2F477B"/>
<rect x="634" y="354" width="8" height="10" fill="#2F477B"/>
<rect x="644" y="354" width="8" height="10" fill="#2F477B"/>
<rect x="654" y="354" width="8" height="10" fill="#2F477B"/>
<rect x="664" y="354" width="8" height="10" fill="#2F477B"/>
<rect x="594" y="365" width="8" height="10" fill="#2F477B"/>
<rect x="604" y="365" width="8" height="10" fill="#2F477B"/>
<rect x="614" y="365" width="8" height="10" fill="#2F477B"/>
<rect x="624" y="365" width="8" height="10" fill="#2F477B"/>
<rect x="634" y="365" width="8" height="10" fill="#2F477B"/>
<rect x="644" y="365" width="8" height="10" fill="#2F477B"/>
<rect x="654" y="365" width="8" height="10" fill="#2F477B"/>
<rect x="664" y="365" width="8" height="10" fill="#2F477B"/>
<rect x="594" y="376" width="8" height="10" fill="#2F477B"/>
<rect x="604" y="376" width="8" height="10" fill="#2F477B"/>
<rect x="614" y="376" width="8" height="10" fill="#2F477B"/>
<rect x="624" y="376" width="8" height="10" fill="#2F477B"/>
<rect x="634" y="376" width="8" height="10" fill="#2F477B"/>
<rect x="644" y="376" width="8" height="10" fill="#2F477B"/>
<rect x="654" y="376" width="8" height="10" fill="#2F477B"/>
<rect x="664" y="376" width="8" height="10" fill="#2F477B"/>
<rect x="594" y="387" width="8" height="10" fill="#30487C"/>
<rect x="604" y="387" width="8" height="10" fill="#30487C"/>
<rect x="614" y="387" width="8" height="10" fill="#30487C"/>
<rect x="624" y="387" width="8" height="10" fill="#30487C"/>
<rect x="634" y="387" width="8" height="10" fill="#30487C"/>
<rect x="644" y="387" width="8" height="10" fill="#30487C"/>
<rect x="654" y="387" width="8" height="10" fill="#30487C"/>
<rect x="664" y="387" width="8" height="10" fill="#30487C"/>
<rect x="594" y="398" width="8" height="10" fill="#30487C"/>
<rect x="604" y="398" width="8" height="10" fill="#30487C"/>
<rect x="614" y="398" width="8" height="10" fill="#30487C"/>
<rect x="624" y="398" width="8" height="10" fill="#30487C"/>
<rect x="634" y="398" width="8" height="10" fill="#30487C"/>
<rect x="644" y="398" width="8" height="10" fill="#30487C"/>
<rect x="654" y="398" width="8" height="10" fill="#1E3C80"/>
<rect x="664" y="398" width="8" height="10" fill="#1E3C80"/>
<rect x="594" y="409" width="8" height="10" fill="#223E86"/>
<rect x="604" y="409" width="8" height="10" fill="#223E86"/>
<rect x="614" y="409" width="8" height="10" fill="#223E86"/>
<rect x="624" y="409" width="8" height="10" fill="#223E86"/>
<rect x="634" y="409" width="8" height="10" fill="#223E86"/>
<rect x="644" y="409" width="8" height="10" fill="#223E86"/>
<rect x="654" y="409" width="8" height="10" fill="#223E86"/>
<rect x="664" y="409" width="8" height="10" fill="#223E86"/>
<rect x="594" y="420" width="8" height="10" fill="#2A4684"/>
<rect x="604" y="420" width="8" height="10" fill="#2A4684"/>
<rect x="614" y="420" width="8" height="10" fill="#2A4684"/>
<rect x="624" y="420" width="8" height="10" fill="#2A4684"/>
<rect x="634" y="420" width="8" height="10" fill="#2A4684"/>
<rect x="644" y="420" width="8" height="10" fill="#2A4684"/>
<rect x="654" y="420" width="8" height="10" fill="#2A4684"/>
<rect x="664" y="420" width="8" height="10" fill="#2A4684"/>
<rect x="594" y="431" width="8" height="10" fill="#304A80"/>
<rect x="604" y="431" width="8" height="10" fill="#304A80"/>
<rect x="614" y="431" width="8" height="10" fill="#304A80"/>
<rect x="624" y="431" width="8" height="10" fill="#304A80"/>
<rect x="634" y="431" width="8" height="10" fill="#304A80"/>
<rect x="644" y="431" width="8" height="10" fill="#304A80"/>
<rect x="654" y="431" width="8" height="10" fill="#304A80"/>
<rect x="664" y="431" width="8" height="10" fill="#304A80"/>
<rect x="594" y="442" width="8" height="10" fill="#304A80"/>
<rect x="604" y="442" width="8" height="10" fill="#304A80"/>
<rect x="614" y="442" width="8" height="10" fill="#304A80"/>
<rect x="624" y="442" width="8" height="10" fill="#304A80"/>
<rect x="634" y="442" width="8" height="10" fill="#304A80"/>
<rect x="644" y="442" width="8" height="10" fill="#304A80"/>
<rect x="654" y="442" width="8" height="10" fill="#304A80"/>
<rect x="664" y="442" width="8" height="10" fill="#304A80"/>
<rect x="594" y="453" width="8" height="10" fill="#304A80"/>
<rect x="604" y="453" width="8" height="10" fill="#304A80"/>
<rect x="614" y="453" width="8" height="10" fill="#304A80"/>
<rect x="624" y="453" width="8" height="10" fill="#304A80"/>
<rect x="634" y="453" width="8" height="10" fill="#304A80"/>
<rect x="644" y="453" width="8" height="10" fill="#304A80"/>
<rect x="654" y="453" width="8" height="10" fill="#304A80"/>
<rect x="664" y="453" width="8" height="10" fill="#304A80"/>
<rect x="594" y="464" width="8" height="10" fill="#304A80"/>
<rect x="604" y="464" width="8" height="10" fill="#304A80"/>
<rect x="614" y="464" width="8" height="10" fill="#304A80"/>
<rect x="624" y="464" width="8" height="10" fill="#304A80"/>
<rect x="634" y="464" width="8" height="10" fill="#304A80"/>
<rect x="644" y="464" width="8" height="10" fill="#304A80"/>
<rect x="654" y="464" width="8" height="10" fill="#304A80"/>
<rect x="664" y="464" width="8" height="10" fill="#304A80"/>
<rect x="594" y="475" width="8" height="10" fill="#304A80"/>
<rect x="604" y="475" width="8" height="10" fill="#304A80"/>
<rect x="614" y="475" width="8" height="10" fill="#304A80"/>
<rect x="624" y="475" width="8" height="10" fill="#304A80"/>
<rect x="634" y="475" width="8" height="10" fill="#304A80"/>
<rect x="644" y="475" width="8" height="10" fill="#304A80"/>
<rect x="654" y="475" width="8" height="10" fill="#304A80"/>
<rect x="664" y="475" width="8" height="10" fill="#304A80"/>
<rect x="594" y="486" width="8" height="10" fill="#3A5AA0"/>
<rect x="604" y="486" width="8" height="10" fill="#3A5AA0"/>
<rect x="614" y="486" width="8" height="10" fill="#3A5AA0"/>
<rect x="624" y="486" width="8" height="10" fill="#3A5AA0"/>
<rect x="634" y="486" width="8" height="10" fill="#3A5AA0"/>
<rect x="644" y="486" width="8" height="10" fill="#3A5AA0"/>
<rect x="654" y="486" width="8" height="10" fill="#3A5AA0"/>
<rect x="664" y="486" width="8" height="10" fill="#3A5AA0"/>
<rect x="594" y="497" width="8" height="10" fill="#4464AC"/>
<rect x="604" y="497" width="8" height="10" fill="#4464AC"/>
<rect x="614" y="497" width="8" height="10" fill="#4464AC"/>
<rect x="624" y="497" width="8" height="10" fill="#4464AC"/>
<rect x="634" y="497" width="8" height="10" fill="#4464AC"/>
<rect x="644" y="497" width="8" height="10" fill="#4464AC"/>
<rect x="654" y="497" width="8" height="10" fill="#4464AC"/>
<rect x="664" y="497" width="8" height="10" fill="#4464AC"/>
<rect x="594" y="508" width="8" height="10" fill="#4A6AB4"/>
<rect x="604" y="508" width="8" height="10" fill="#4A6AB4"/>
<rect x="614" y="508" width="8" height="10" fill="#4A6AB4"/>
<rect x="624" y="508" width="8" height="10" fill="#4A6AB4"/>
<rect x="634" y="508" width="8" height="10" fill="#4A6AB4"/>
<rect x="644" y="508" width="8" height="10" fill="#4A6AB4"/>
<rect x="654" y="508" width="8" height="10" fill="#4A6AB4"/>
<rect x="664" y="508" width="8" height="10" fill="#4A6AB4"/>
<rect x="634" y="519" width="38" height="20" fill="#FAFAFA"/>
<rect x="592.5" y="518.5" width="41" height="21" fill="#F4F4F4" stroke="#C03838"/>
</g>
<rect x="605" y="521" width="16" height="16" fill="url(#hatch)"/>
<g shape-rendering="crispEdges" fill="none" stroke="#909090">
<rect x="645.5" y="521.5" width="15" height="15"/>
<rect x="647.5" y="523.5" width="11" height="11"/>
<rect x="649.5" y="525.5" width="7" height="7"/>
<rect x="651" y="527" width="4" height="4" fill="#A0A0A0" stroke="none"/>
</g>
<g shape-rendering="crispEdges">
<rect x="596" y="544" width="73" height="6" fill="url(#gsl1)"/>
<rect x="596" y="544" width="73" height="1" fill="#A0A0A0"/>
<rect x="596" y="544" width="1" height="6" fill="#A0A0A0"/>
<rect x="596" y="558" width="73" height="6" fill="url(#gsl2)"/>
<rect x="596" y="558" width="73" height="1" fill="#A0A0A0"/>
<rect x="596" y="558" width="1" height="6" fill="#A0A0A0"/>
</g>
<path d="M665 555.5 L669 550.5 L673 555.5 Z" fill="#000"/>
<path d="M594 568.5 L598 563.5 L602 568.5 Z" fill="#000"/>
</svg>
<!-- right panel -->
<svg width="0" height="0" style="position:absolute">
<defs>
<symbol id="syr" viewBox="0 0 64 64">
<linearGradient id="gsq" x1="0" y1="0" x2="0" y2="1"><stop offset="0" stop-color="#2C4684"/><stop offset="1" stop-color="#4868B0"/></linearGradient>
<radialGradient id="gdisc" cx="0.5" cy="0.4" r="0.6"><stop offset="0" stop-color="#4C6CB6"/><stop offset="0.75" stop-color="#4262AA"/><stop offset="1" stop-color="#2A4688"/></radialGradient>
<rect width="64" height="64" fill="url(#gsq)"/>
<circle cx="32" cy="31.5" r="30.5" fill="#223C78" opacity="0.7"/>
<circle cx="32" cy="31.5" r="28" fill="#3656A0"/>
<circle cx="32" cy="31.5" r="26.5" fill="#1E3874" opacity="0.6"/>
<circle cx="32" cy="31.5" r="24.5" fill="url(#gdisc)"/>
<g fill="none" stroke-width="3.4">
<path d="M9.6 30 A22.5 22.5 0 0 1 32 9" stroke="#B86858"/>
<path d="M32 9 A22.5 22.5 0 0 1 54.5 31.5" stroke="#7AAE4A"/>
<path d="M54.5 31.5 A22.5 22.5 0 0 1 32 54" stroke="#D8B64C"/>
<path d="M32 54 A22.5 22.5 0 0 1 9.5 31.5" stroke="#40A8E2"/>
</g>
<path d="M8 28.5 L13.5 31 L8 33 Z" fill="#4262AA"/>
<g transform="translate(28.1 25.8) rotate(-41.7)">
<rect x="-11" y="-2.6" width="20" height="5.2" fill="none" stroke="#fff" stroke-width="1.3"/>
<path d="M-10 0 h9" stroke="#fff" stroke-width="1"/>
<path d="M-11 0 h-7.5" stroke="#fff" stroke-width="1.3"/>
<path d="M9 0 h4.5 M13.5 -3.5 v7 M9 -3.8 v7.6" stroke="#fff" stroke-width="1.5"/>
</g>
<path d="M37 29 h6 v5 h5.5 v6 h-5.5 v5.5 h-6 v-5.5 h-5.5 v-6 h5.5 Z" fill="#C41220" stroke="#F4E8EC" stroke-width="1.5" stroke-linejoin="round"/>
</symbol>
</defs>
</svg>
<div class="a" style="left:674px;top:142px;width:135px;height:374px;background:#FFFFFF"></div>
<div class="a" style="left:675px;top:143px;width:134px;height:372px;background:#F0F0F0;border:1px solid #9A9A9A;box-shadow:inset 0 0 0 1px #FFFFFF"></div>
<svg class="a" style="left:680px;top:147px" width="64" height="64"><use href="#syr"/></svg>
<div class="a" style="left:746px;top:145px;width:61px;height:68px;background:#3399FF;border:1px solid #C8E4FF"></div>
<div class="a" style="left:747px;top:166px;font-size:11px;line-height:15px;color:#fff;letter-spacing:-0.2px">64x64<br>32bpp</div>
<div class="a" style="left:674px;top:517px;width:135px;height:72px;background:#FFFFFF"></div>
<div class="a" style="left:675px;top:518px;width:134px;height:71px;background:#F0F0F0;border:1px solid #9A9A9A;box-shadow:inset 0 0 0 1px #FFFFFF"></div>
<svg class="a" style="left:709px;top:521px" width="64" height="64"><use href="#syr"/></svg>
<!-- status bar -->
<div class="a" style="left:67px;top:587px;width:607px;height:2px;background:#FFFFFF"></div>
<svg class="a" style="left:0;top:588px" width="816" height="20" viewBox="0 588 816 20">
<g shape-rendering="crispEdges">
<rect x="430" y="591" width="1" height="16" fill="#C4C4C4"/>
<rect x="572" y="591" width="1" height="16" fill="#C4C4C4"/>
<rect x="648" y="591" width="1" height="16" fill="#C4C4C4"/>
<rect x="718" y="591" width="1" height="16" fill="#C4C4C4"/>
<rect x="768" y="591" width="1" height="16" fill="#C4C4C4"/>
<rect x="788" y="591" width="1" height="16" fill="#C4C4C4"/>
<rect x="582.5" y="598.5" width="8" height="8" fill="none" stroke="#000" stroke-dasharray="1 1"/>
<rect x="583" y="593" width="1" height="3" fill="#2A4A90"/>
<rect x="584" y="594" width="6" height="1" fill="#2A4A90"/>
<rect x="577" y="597" width="3" height="1" fill="#2A4A90"/>
<rect x="578" y="598" width="1" height="7" fill="#2A4A90"/>
<rect x="577" y="606" width="3" height="1" fill="#2A4A90"/>
<rect x="657.5" y="597.5" width="9" height="9" fill="none" stroke="#000" stroke-dasharray="1 1"/>
<rect x="653" y="597" width="9" height="1" fill="#E07040"/>
<rect x="657" y="592" width="1" height="10" fill="#E07040"/>
<rect x="805" y="598" width="2" height="2" fill="#B4B4B4"/>
<rect x="802" y="601" width="2" height="2" fill="#B4B4B4"/><rect x="805" y="601" width="2" height="2" fill="#B4B4B4"/>
<rect x="799" y="604" width="2" height="2" fill="#B4B4B4"/><rect x="802" y="604" width="2" height="2" fill="#B4B4B4"/><rect x="805" y="604" width="2" height="2" fill="#B4B4B4"/>
</g>
<path d="M591.5 593.5 l-2 -1.5 v3 z" fill="#2A4A90"/>
<circle cx="727.5" cy="598" r="5.3" fill="#F4F6FC" stroke="#8890B8" stroke-width="1.3"/>
<path d="M731 602 L736.5 606" stroke="#5A90D0" stroke-width="2.6" stroke-linecap="round"/>
</svg>
<div class="a" style="left:742px;top:593px;font-size:11.5px;line-height:14px;color:#000">6:1</div>
</body></html>
